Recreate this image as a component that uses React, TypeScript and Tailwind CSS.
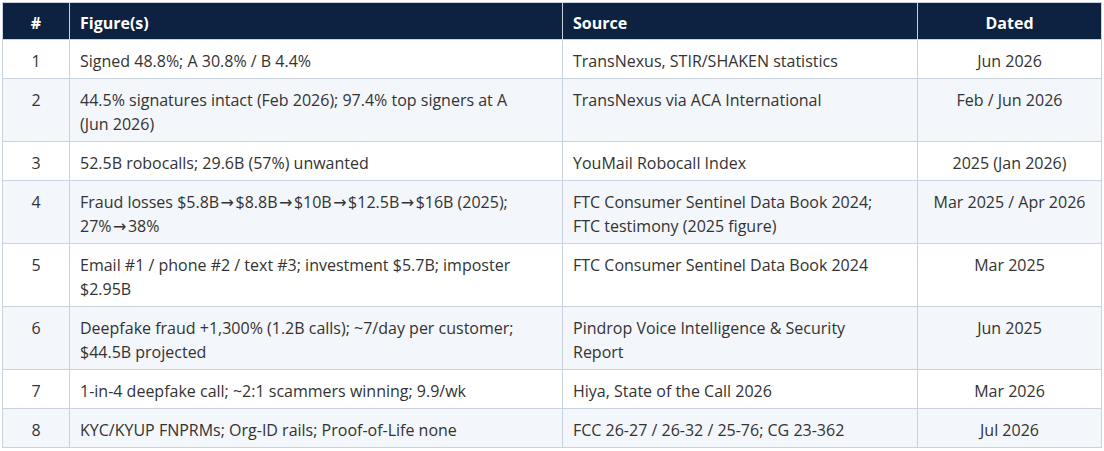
import React from 'react'

type Row = {
    n: number
    figures: React.ReactNode
    source: React.ReactNode
    dated: string
}

// arrow glyph is missing from Open Sans, so pin it to a font that has a full-width one
const Arr = () => <span className="px-[1.5px] font-['DejaVu_Sans',sans-serif] text-[16px] leading-none">→</span>

const rows: Row[] = [
    { n: 1, figures: 'Signed 48.8%; A 30.8% / B 4.4%', source: 'TransNexus, STIR/SHAKEN statistics', dated: 'Jun 2026' },
    {
        n: 2,
        figures: (<>44.5% signatures intact (Feb 2026); 97.4% top signers at A<br />(Jun 2026)</>),
        source: 'TransNexus via ACA International',
        dated: 'Feb / Jun 2026',
    },
    { n: 3, figures: '52.5B robocalls; 29.6B (57%) unwanted', source: 'YouMail Robocall Index', dated: '2025 (Jan 2026)' },
    {
        n: 4,
        figures: (<>Fraud losses $5.8B<Arr />$8.8B<Arr />$10B<Arr />$12.5B<Arr />$16B (2025);<br />27%<Arr />38%</>),
        source: (<>FTC Consumer Sentinel Data Book 2024;<br />FTC testimony (2025 figure)</>),
        dated: 'Mar 2025 / Apr 2026',
    },
    {
        n: 5,
        figures: (<>Email #1 / phone #2 / text #3; investment $5.7B; imposter<br />$2.95B</>),
        source: 'FTC Consumer Sentinel Data Book 2024',
        dated: 'Mar 2025',
    },
    {
        n: 6,
        figures: (<>Deepfake fraud +1,300% (1.2B calls); ~7/day per customer;<br />$44.5B projected</>),
        source: (<>Pindrop Voice Intelligence &amp; Security<br />Report</>),
        dated: 'Jun 2025',
    },
    { n: 7, figures: '1-in-4 deepfake call; ~2:1 scammers winning; 9.9/wk', source: 'Hiya, State of the Call 2026', dated: 'Mar 2026' },
    { n: 8, figures: 'KYC/KYUP FNPRMs; Org-ID rails; Proof-of-Life none', source: 'FCC 26-27 / 26-32 / 25-76; CG 23-362', dated: 'Jul 2026' },
]

export default function App() {
    return (
        <div className="bg-white px-[2px] pt-[2px] font-['Open_Sans',sans-serif] text-[16px] text-[#333333]">
            <table className="w-[1099px] table-fixed border-collapse border border-[#c9d3df]">
                <colgroup>
                    <col className="w-[67px]" />
                    <col className="w-[493px]" />
                    <col className="w-[355px]" />
                    <col className="w-[184px]" />
                </colgroup>
                <thead>
                    <tr className="h-[37px] bg-[#0d2241] text-white font-bold">
                        <th className="border border-[#c9d3df] px-[10px] pt-[3px] text-center">#</th>
                        <th className="border border-[#c9d3df] px-[10px] pt-[3px] text-left">Figure(s)</th>
                        <th className="border border-[#c9d3df] px-[10px] pt-[3px] text-left">Source</th>
                        <th className="border border-[#c9d3df] px-[10px] pt-[3px] text-center">Dated</th>
                    </tr>
                </thead>
                <tbody>
                    {rows.map((r) => (
                        <tr key={r.n} className={r.n % 2 === 0 ? 'bg-[#f3f6fa]' : 'bg-white'}>
                            <td className="border border-[#c9d3df] px-[10px] pt-[9px] pb-[5px] align-top text-center leading-[24px]">{r.n}</td>
                            <td className="border border-[#c9d3df] px-[10px] pt-[9px] pb-[5px] align-top leading-[24px]">{r.figures}</td>
                            <td className="border border-[#c9d3df] px-[10px] pt-[9px] pb-[5px] align-top leading-[24px]">{r.source}</td>
                            <td className="border border-[#c9d3df] px-[10px] pt-[9px] pb-[5px] align-top text-center leading-[24px]">{r.dated}</td>
                        </tr>
                    ))}
                </tbody>
            </table>
        </div>
    )
}
